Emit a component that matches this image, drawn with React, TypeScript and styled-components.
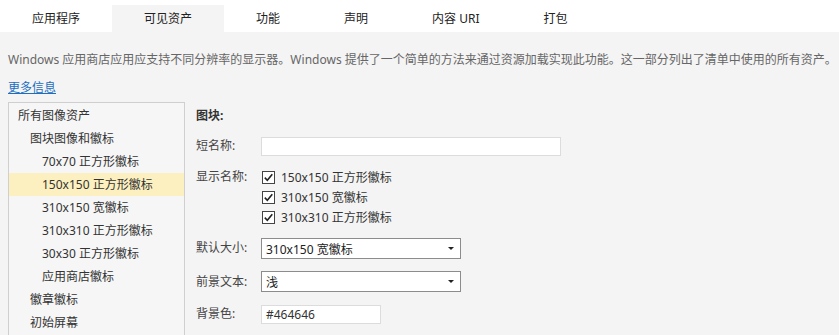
import React from "react";
import styled, { createGlobalStyle } from "styled-components";

const GlobalStyle = createGlobalStyle`
  body {
    margin: 0;
    background-color: #f4f4f4;
    font-family: "Noto Sans", "Noto Sans CJK SC", sans-serif;
    font-size: 12px;
    color: #333;
  }
`;

const Page = styled.div`
  width: 839px;
  height: 335px;
  overflow: hidden;
`;

const TabBar = styled.div`
  display: flex;
  align-items: flex-end;
  height: 32px;
  background-color: #ffffff;
`;

const Tab = styled.div<{ $active?: boolean }>`
  height: 27px;
  line-height: 27px;
  padding: 0 32px;
  color: #222;
  background-color: ${(p) => (p.$active ? "#f4f4f4" : "transparent")};
`;

const Description = styled.div`
  margin-top: 20px;
  padding-left: 8px;
  line-height: 16px;
  color: #666;
  white-space: nowrap;
`;

const MoreInfo = styled.a`
  display: inline-block;
  margin: 12px 0 0 8px;
  line-height: 16px;
  color: #1c6fc0;
  text-decoration: underline;
`;

const Body = styled.div`
  display: flex;
  margin-top: 6px;
`;

const TreePanel = styled.div`
  margin-left: 8px;
  width: 175px;
  height: 240px;
  padding-top: 1px;
  border: 1px solid #cfcfcf;
  border-bottom: none;
  background-color: #f6f6f6;
`;

const TreeItem = styled.div<{ $level: number; $selected?: boolean }>`
  height: 23px;
  line-height: 23px;
  padding-left: ${(p) => 9 + p.$level * 12}px;
  color: #333;
  background-color: ${(p) => (p.$selected ? "#fcf0c0" : "transparent")};
`;

const Form = styled.div`
  margin-left: 11px;
  padding-top: 6px;
`;

const Heading = styled.div`
  font-weight: bold;
  line-height: 16px;
  color: #333;
`;

const FieldRow = styled.div<{ $top?: boolean }>`
  display: grid;
  grid-template-columns: 65px auto;
  align-items: ${(p) => (p.$top ? "start" : "center")};
  margin-top: ${(p) => (p.$top ? 11 : 12)}px;
`;

const Label = styled.div`
  line-height: 20px;
  color: #444;
`;

const TextBox = styled.div<{ $width: number }>`
  box-sizing: border-box;
  width: ${(p) => p.$width}px;
  height: 19px;
  line-height: 17px;
  padding-left: 4px;
  border: 1px solid #dcdcdc;
  background-color: #ffffff;
  color: #333;
`;

const Select = styled.div`
  box-sizing: border-box;
  display: flex;
  align-items: center;
  justify-content: space-between;
  width: 200px;
  height: 21px;
  padding: 0 6px 0 4px;
  border: 1px solid #8c8c8c;
  background-color: #ffffff;
  color: #222;
`;

const Caret = styled.span`
  width: 0;
  height: 0;
  border-left: 3px solid transparent;
  border-right: 3px solid transparent;
  border-top: 3px solid #222;
`;

const CheckList = styled.div`
  display: flex;
  flex-direction: column;
`;

const CheckLine = styled.div`
  display: flex;
  align-items: center;
  gap: 6px;
  height: 20px;
  color: #333;
`;

const Box = styled.span`
  box-sizing: border-box;
  display: flex;
  align-items: center;
  justify-content: center;
  width: 13px;
  height: 13px;
  margin-left: 1px;
  border: 1px solid #444;
  background-color: #ffffff;
`;

const Check = ({ label }: { label: string }) => (
  <CheckLine>
    <Box>
      <svg width="11" height="11" viewBox="0 0 11 11">
        <path d="M1.8 5.6 L4.3 8.2 L9.3 2.2" fill="none" stroke="#222" strokeWidth="1.6" />
      </svg>
    </Box>
    {label}
  </CheckLine>
);

const tabs = ["应用程序", "可见资产", "功能", "声明", "内容 URI", "打包"];

const tree = [
  { text: "所有图像资产", level: 0 },
  { text: "图块图像和徽标", level: 1 },
  { text: "70x70 正方形徽标", level: 2 },
  { text: "150x150 正方形徽标", level: 2, selected: true },
  { text: "310x150 宽徽标", level: 2 },
  { text: "310x310 正方形徽标", level: 2 },
  { text: "30x30 正方形徽标", level: 2 },
  { text: "应用商店徽标", level: 2 },
  { text: "徽章徽标", level: 1 },
  { text: "初始屏幕", level: 1 },
];

export default function App() {
  return (
    <Page>
      <GlobalStyle />
      <TabBar>
        {tabs.map((t) => (
          <Tab key={t} $active={t === "可见资产"}>
            {t}
          </Tab>
        ))}
      </TabBar>
      <Description>
        Windows 应用商店应用应支持不同分辨率的显示器。Windows 提供了一个简单的方法来通过资源加载实现此功能。这一部分列出了清单中使用的所有资产。
      </Description>
      <MoreInfo href="#">更多信息</MoreInfo>
      <Body>
        <TreePanel>
          {tree.map((item) => (
            <TreeItem key={item.text} $level={item.level} $selected={item.selected}>
              {item.text}
            </TreeItem>
          ))}
        </TreePanel>
        <Form>
          <Heading>图块:</Heading>
          <FieldRow>
            <Label>短名称:</Label>
            <TextBox $width={300} />
          </FieldRow>
          <FieldRow $top>
            <Label>显示名称:</Label>
            <CheckList>
              <Check label="150x150 正方形徽标" />
              <Check label="310x150 宽徽标" />
              <Check label="310x310 正方形徽标" />
            </CheckList>
          </FieldRow>
          <FieldRow $top>
            <Label>默认大小:</Label>
            <Select>
              310x150 宽徽标
              <Caret />
            </Select>
          </FieldRow>
          <FieldRow>
            <Label>前景文本:</Label>
            <Select>
              浅
              <Caret />
            </Select>
          </FieldRow>
          <FieldRow>
            <Label>背景色:</Label>
            <TextBox $width={120}>#464646</TextBox>
          </FieldRow>
        </Form>
      </Body>
    </Page>
  );
}
